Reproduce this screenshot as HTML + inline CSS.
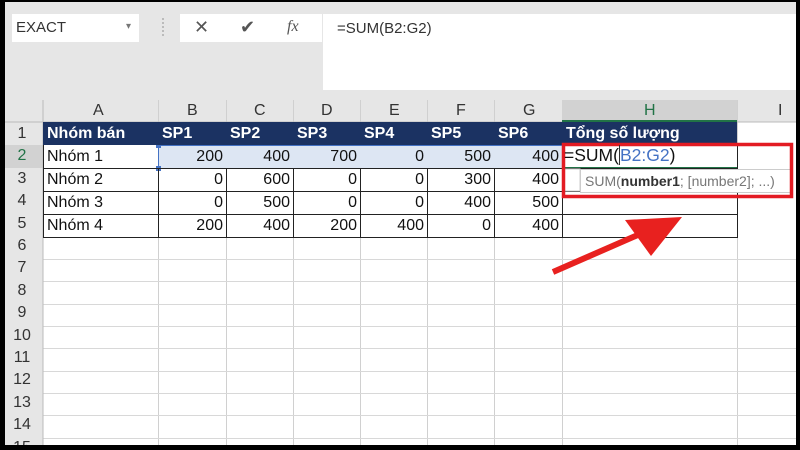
<!DOCTYPE html>
<html><head><meta charset="utf-8"><style>
*{margin:0;padding:0;box-sizing:border-box}
body{width:800px;height:450px;overflow:hidden;background:#000;position:relative;font-family:"Liberation Sans",Arial,sans-serif}
.a{position:absolute}
#app{left:5px;top:2px;width:791px;height:443px;background:#e6e6e6;overflow:hidden}
.t{position:absolute;font-size:16px;line-height:23px;white-space:nowrap}
</style></head><body>
<div id="app" class="a">
 <div class="a" style="left:7px;top:12px;width:127px;height:28px;background:#fff"></div>
 <div class="t" style="left:11px;top:14px;font-size:15px;color:#333">EXACT</div>
 <div class="t" style="left:121px;top:13px;font-size:10px;color:#777">▾</div>
 <div class="a" style="left:157px;top:16px;width:2px;height:18px;border-left:2px dotted #bbb"></div>
 <div class="a" style="left:175px;top:12px;width:142px;height:28px;background:#fff"></div>
 <div class="t" style="left:189px;top:14px;font-size:18px;color:#555">✕</div>
 <div class="t" style="left:235px;top:14px;font-size:18px;color:#555">✔</div>
 <div class="t" style="left:282px;top:13px;font-size:16px;color:#555;font-style:italic;font-family:'Liberation Serif',serif">fx</div>
 <div class="a" style="left:318px;top:12px;width:480px;height:76px;background:#fff"></div>
 <div class="t" style="left:332px;top:15px;font-size:15px;color:#333">=SUM(B2:G2)</div>
 <div class="a" style="left:38px;top:120px;width:760px;height:330px;background:#fff"></div>
 <svg class="a" style="left:0;top:0" width="791" height="443">
  <polygon points="16,116 33,116 33,99" fill="#c8c8c8"/>
  <g stroke="#d0d0d0" stroke-width="1">
   <line x1="153.5" y1="98" x2="153.5" y2="443"/><line x1="221.5" y1="98" x2="221.5" y2="443"/>
   <line x1="288.5" y1="98" x2="288.5" y2="443"/><line x1="355.5" y1="98" x2="355.5" y2="443"/>
   <line x1="422.5" y1="98" x2="422.5" y2="443"/><line x1="489.5" y1="98" x2="489.5" y2="443"/>
   <line x1="557.5" y1="98" x2="557.5" y2="443"/><line x1="732.5" y1="98" x2="732.5" y2="443"/>
  </g>
  <g stroke="#d8d8d8">
   <line x1="0" y1="257.5" x2="791" y2="257.5"/><line x1="0" y1="279.5" x2="791" y2="279.5"/>
   <line x1="0" y1="302.5" x2="791" y2="302.5"/><line x1="0" y1="324.5" x2="791" y2="324.5"/>
   <line x1="0" y1="346.5" x2="791" y2="346.5"/><line x1="0" y1="369.5" x2="791" y2="369.5"/>
   <line x1="0" y1="391.5" x2="791" y2="391.5"/><line x1="0" y1="413.5" x2="791" y2="413.5"/>
   <line x1="0" y1="436.5" x2="791" y2="436.5"/>
  </g>
  <rect x="0" y="98" width="38" height="345" fill="#e6e6e6"/>
  <rect x="557" y="98" width="175" height="22" fill="#d2d2d2"/>
  <rect x="0" y="143" width="38" height="23" fill="#d2d2d2"/>
  <line x1="0" y1="120" x2="791" y2="120" stroke="#bbb"/>
  <line x1="38" y1="98" x2="38" y2="443" stroke="#bbb"/>
  <line x1="557" y1="119" x2="732" y2="119" stroke="#217346" stroke-width="2"/>
  <rect x="153" y="144" width="404" height="22" fill="#dde6f3"/>
  <rect x="153.5" y="143.5" width="404" height="23" fill="none" stroke="#4472c4"/>
  <rect x="151" y="141" width="5" height="5" fill="#4472c4"/><rect x="151" y="164" width="5" height="5" fill="#4472c4"/>
  <rect x="38" y="120" width="694" height="23" fill="#1b3262"/>
  <g stroke="#222" stroke-width="1">
   <line x1="38" y1="166.5" x2="732" y2="166.5"/><line x1="38" y1="189.5" x2="732" y2="189.5"/>
   <line x1="38" y1="212.5" x2="732" y2="212.5"/><line x1="38" y1="235.5" x2="732" y2="235.5"/>
   <line x1="38.5" y1="143" x2="38.5" y2="236"/>
   <line x1="153.5" y1="166" x2="153.5" y2="236"/><line x1="221.5" y1="166" x2="221.5" y2="236"/>
   <line x1="288.5" y1="166" x2="288.5" y2="236"/><line x1="355.5" y1="166" x2="355.5" y2="236"/>
   <line x1="422.5" y1="166" x2="422.5" y2="236"/><line x1="489.5" y1="166" x2="489.5" y2="236"/>
   <line x1="557.5" y1="143" x2="557.5" y2="236"/><line x1="732.5" y1="143" x2="732.5" y2="236"/>
  </g>
  <rect x="558" y="143" width="174" height="23" fill="#fff"/>
  <line x1="558" y1="165.5" x2="732" y2="165.5" stroke="#217346"/>
  <rect x="558" y="167" width="17" height="22" fill="#fff" stroke="#ccc"/>
  <rect x="575.5" y="167.5" width="211" height="23" fill="#fff" stroke="#ccc"/>
  <rect x="558.5" y="142.5" width="228" height="52" fill="none" stroke="#e31b23" stroke-width="3.5"/>
  <line x1="548" y1="270" x2="635" y2="232" stroke="#e8211f" stroke-width="6"/>
  <polygon points="677,215 620,218 646,254" fill="#e8211f"/>
 </svg>
 <div class="t" style="left:88px;top:97px;color:#333">A</div>
 <div class="t" style="left:182px;top:97px;color:#333">B</div>
 <div class="t" style="left:249px;top:97px;color:#333">C</div>
 <div class="t" style="left:316px;top:97px;color:#333">D</div>
 <div class="t" style="left:384px;top:97px;color:#333">E</div>
 <div class="t" style="left:451px;top:97px;color:#333">F</div>
 <div class="t" style="left:518px;top:97px;color:#333">G</div>
 <div class="t" style="left:639px;top:97px;color:#217346">H</div>
 <div class="t" style="left:773px;top:97px;color:#333">I</div>
 <div class="a" style="left:0;top:121px;width:34px;font-size:16px;line-height:22.4px;text-align:center;color:#333">1<br><span style="color:#217346">2</span><br>3<br>4<br>5<br>6<br>7<br>8<br>9<br>10<br>11<br>12<br>13<br>14<br>15</div>
 <div class="t" style="left:42px;top:120px;color:#fff;font-weight:bold">Nhóm bán</div>
 <div class="t" style="left:157px;top:120px;color:#fff;font-weight:bold">SP1</div>
 <div class="t" style="left:225px;top:120px;color:#fff;font-weight:bold">SP2</div>
 <div class="t" style="left:292px;top:120px;color:#fff;font-weight:bold">SP3</div>
 <div class="t" style="left:359px;top:120px;color:#fff;font-weight:bold">SP4</div>
 <div class="t" style="left:426px;top:120px;color:#fff;font-weight:bold">SP5</div>
 <div class="t" style="left:493px;top:120px;color:#fff;font-weight:bold">SP6</div>
 <div class="t" style="left:561px;top:120px;color:#fff;font-weight:bold">Tổng số lượng</div>
 <div class="t" style="left:42px;top:143px;color:#111">Nhóm 1</div>
 <div class="t" style="left:42px;top:166px;color:#111">Nhóm 2</div>
 <div class="t" style="left:42px;top:189px;color:#111">Nhóm 3</div>
 <div class="t" style="left:42px;top:212px;color:#111">Nhóm 4</div>
 <div class="a" style="left:153px;top:143px;font-size:16px;line-height:23px;color:#111">
  <div style="display:flex"><span style="width:68px;text-align:right;padding-right:3px">200</span><span style="width:67px;text-align:right;padding-right:3px">400</span><span style="width:67px;text-align:right;padding-right:3px">700</span><span style="width:67px;text-align:right;padding-right:3px">0</span><span style="width:67px;text-align:right;padding-right:3px">500</span><span style="width:68px;text-align:right;padding-right:3px">400</span></div>
  <div style="display:flex"><span style="width:68px;text-align:right;padding-right:3px">0</span><span style="width:67px;text-align:right;padding-right:3px">600</span><span style="width:67px;text-align:right;padding-right:3px">0</span><span style="width:67px;text-align:right;padding-right:3px">0</span><span style="width:67px;text-align:right;padding-right:3px">300</span><span style="width:68px;text-align:right;padding-right:3px">400</span></div>
  <div style="display:flex"><span style="width:68px;text-align:right;padding-right:3px">0</span><span style="width:67px;text-align:right;padding-right:3px">500</span><span style="width:67px;text-align:right;padding-right:3px">0</span><span style="width:67px;text-align:right;padding-right:3px">0</span><span style="width:67px;text-align:right;padding-right:3px">400</span><span style="width:68px;text-align:right;padding-right:3px">500</span></div>
  <div style="display:flex"><span style="width:68px;text-align:right;padding-right:3px">200</span><span style="width:67px;text-align:right;padding-right:3px">400</span><span style="width:67px;text-align:right;padding-right:3px">200</span><span style="width:67px;text-align:right;padding-right:3px">400</span><span style="width:67px;text-align:right;padding-right:3px">0</span><span style="width:68px;text-align:right;padding-right:3px">400</span></div>
 </div>
 <div class="t" style="left:559px;top:142px;font-size:17.5px;color:#111">=SUM(<span style="border-left:1px solid #333;color:#4472c4">B2:G2</span>)</div>
 <div class="t" style="left:580px;top:168px;font-size:14px;color:#777">SUM(<b style="color:#333">number1</b>; [number2]; ...)</div>
</div>
</body></html>
